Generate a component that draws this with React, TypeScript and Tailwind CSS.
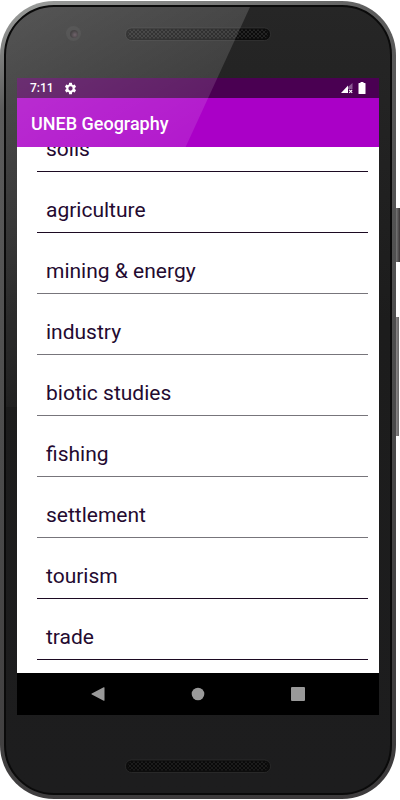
import clsx from "clsx";

const topics = [
  "soils",
  "agriculture",
  "mining & energy",
  "industry",
  "biotic studies",
  "fishing",
  "settlement",
  "tourism",
  "trade",
];

const Speaker = ({ id, dark }: { id: string; dark?: boolean }) => (
  <svg className="block h-[14px] w-[146px]" viewBox="0 0 146 14" aria-hidden="true">
    <defs>
      <pattern id={id} width="4" height="4" patternUnits="userSpaceOnUse">
        <rect width="4" height="4" fill={dark ? "#1c1c1c" : "#242424"} />
        <circle cx="1" cy="1" r="0.9" fill="#000" />
        <circle cx="3" cy="3" r="0.9" fill="#000" />
      </pattern>
    </defs>
    <rect x="0.5" y="1" width="145" height="12.5" rx="6" fill="#0c0c0c" stroke={dark ? "#303030" : "#3a3a3a"} strokeWidth="0.7" />
    <rect x="3" y="2.5" width="140" height="9" rx="4.5" fill={`url(#${id})`} />
  </svg>
);

const StatusBar = () => (
  <div className="flex h-5 shrink-0 items-center bg-[#4a0052] pl-[13px] pr-[13px] text-white">
    <span className="w-6 text-[12px] font-medium leading-5">7:11</span>
    <svg className="ml-[10px] h-[13px] w-[13px]" viewBox="1 1 22 22" fill="currentColor" aria-hidden="true">
      <path d="M19.14 12.94c.04-.3.06-.61.06-.94 0-.32-.02-.64-.07-.94l2.03-1.58a.49.49 0 0 0 .12-.61l-1.92-3.32a.49.49 0 0 0-.59-.22l-2.39.96c-.5-.38-1.03-.7-1.62-.94l-.36-2.54a.48.48 0 0 0-.48-.41h-3.84c-.24 0-.43.17-.47.41l-.36 2.54c-.59.24-1.13.57-1.62.94l-2.39-.96a.48.48 0 0 0-.59.22L2.74 8.87c-.12.21-.08.47.12.61l2.03 1.58c-.05.3-.09.63-.09.94s.02.64.07.94l-2.03 1.58a.49.49 0 0 0-.12.61l1.92 3.32c.12.22.37.29.59.22l2.39-.96c.5.38 1.03.7 1.62.94l.36 2.54c.05.24.24.41.48.41h3.84c.24 0 .44-.17.47-.41l.36-2.54c.59-.24 1.13-.56 1.62-.94l2.39.96c.22.08.47 0 .59-.22l1.92-3.32a.49.49 0 0 0-.12-.61l-2.01-1.58zM12 15.6A3.6 3.6 0 1 1 12 8.4a3.6 3.6 0 0 1 0 7.2z" />
    </svg>
    <svg className="ml-auto h-3 w-3" viewBox="0 0 12 12" aria-hidden="true">
      <path d="M11.5 1v6H7V5z" fill="#8a5a92" />
      <path d="M0 11 7 3.5V11z" fill="#fff" />
      <path d="m8.2 7.8 3 3m0-3-3 3" stroke="#fff" strokeWidth="1.1" />
    </svg>
    <svg className="ml-[5px] h-3 w-2" viewBox="0 0 8 12" fill="#fff" aria-hidden="true">
      <path d="M2.5 0h3v1H7q.5 0 .5.5v10q0 .5-.5.5H1q-.5 0-.5-.5v-10Q.5 1 1 1h1.5z" />
    </svg>
  </div>
);

const NavBar = () => (
  <nav className="flex h-[42px] shrink-0 items-center justify-center gap-[86px] bg-black text-[#999]">
    <button type="button" aria-label="Back">
      <svg className="block h-[14px] w-[14px]" viewBox="0 0 14 14" fill="currentColor">
        <path d="M13.5.7v12.6q0 .8-.8.4L.8 7.5Q0 7 .8 6.5L12.7.3q.8-.4.8.4z" />
      </svg>
    </button>
    <button type="button" aria-label="Home">
      <svg className="block h-[14px] w-[14px]" viewBox="0 0 14 14" fill="currentColor">
        <circle cx="7" cy="7" r="6.3" />
      </svg>
    </button>
    <button type="button" aria-label="Recent apps">
      <svg className="block h-[14px] w-[14px]" viewBox="0 0 14 14" fill="currentColor">
        <rect width="14" height="14" rx="1" />
      </svg>
    </button>
  </nav>
);

const App = () => {
  return (
    <div className="h-screen overflow-hidden bg-white py-px pr-1 font-[Roboto,sans-serif]">
      {/* Phone body */}
      <div className="relative flex h-full flex-col rounded-[54px] bg-[linear-gradient(165deg,#a0a2a0_0%,#5c5c5c_12%,#4c4c4c_50%,#3c3a3b_100%)] p-1">
        <div className="flex min-h-0 flex-1 flex-col rounded-[50px] border-2 border-[#0a0a0a] bg-[linear-gradient(to_bottom,#262626,#1c1c1c_40%,#1d1d1e)] px-[11px]">
          <div className="flex h-[71px] shrink-0 justify-center pt-5">
            <Speaker id="grille-top" />
          </div>

          {/* Screen */}
          <div className="flex min-h-0 flex-1 flex-col bg-white">
            <StatusBar />
            <header className="flex h-[49px] shrink-0 items-center bg-[#aa00c7] px-[14px] pt-0.5">
              <h1 className="text-[18px] font-medium leading-6 text-white">UNEB Geography</h1>
            </header>
            <ul className="relative z-10 flex min-h-0 flex-1 flex-col justify-end overflow-hidden bg-white pb-[13px] pl-5 pr-[11px]">
              {topics.map((topic, i) => (
                <li
                  key={topic}
                  className={clsx(
                    "h-[61px] shrink-0 border-b",
                    i < 2 || i > 6 ? "border-[#1c0a22]" : "border-[#77757b]"
                  )}
                >
                  <button type="button" className="h-full w-full px-[9px] pt-4 text-left text-[21px] leading-7 text-[#240a30]">
                    {topic}
                  </button>
                </li>
              ))}
            </ul>
            <NavBar />
          </div>

          <div className="flex h-[78px] shrink-0 items-center justify-center pt-6">
            <Speaker id="grille-bottom" dark />
          </div>
        </div>

        {/* Front camera */}
        <div className="absolute left-[66px] top-[25px] flex size-[15px] items-center justify-center rounded-full bg-[#303030]">
          <span className="size-2 rounded-full bg-[radial-gradient(circle_at_60%_60%,#50404a,#1c181a_60%)]" />
        </div>

        {/* Side keys */}
        <div className="absolute -right-1 top-[207px] h-[54px] w-1 bg-[linear-gradient(to_right,#777,#3a3637)]" />
        <div className="absolute -right-[3px] top-[316px] h-[119px] w-[3px] bg-[linear-gradient(to_right,#8a8788,#666)]" />

        {/* Glass reflection */}
        <svg className="pointer-events-none absolute left-1.5 top-1.5 h-[400px] w-[250px]" viewBox="0 0 250 400" aria-hidden="true">
          <defs>
            <linearGradient id="glare" x1="0" y1="0" x2="0.35" y2="1">
              <stop offset="0" stopColor="#fff" stopOpacity="0.22" />
              <stop offset="1" stopColor="#fff" stopOpacity="0" />
            </linearGradient>
          </defs>
          <path d="M0 400V48A48 48 0 0 1 48 0H244L60 400z" fill="url(#glare)" />
        </svg>
      </div>
    </div>
  );
};

export default App;
